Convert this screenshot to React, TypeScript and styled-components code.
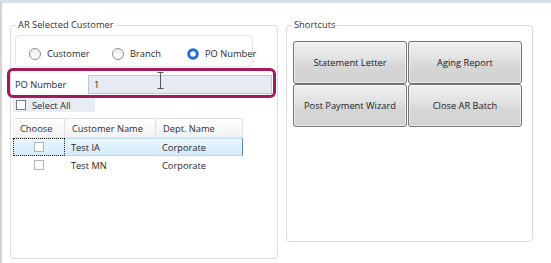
import React from 'react';
import styled, { createGlobalStyle } from 'styled-components';

const Global = createGlobalStyle`
  html, body { margin: 0; padding: 0; background: #fff; }
  body { font-family: "Open Sans", "Noto Sans", sans-serif; font-size: 9.3px; color: #1f1f1f; }
  * { box-sizing: border-box; }
`;

const Window = styled.div`
  width: 551px;
  height: 263px;
  overflow: hidden;
  border-top: 3px solid #d6e0eb;
  border-left: 2px solid #d3d3d3;
  display: flex;
  align-items: flex-start;
  gap: 8px;
  padding: 15px 0 0 8px;
`;

const Group = styled.fieldset<{ $w: number; $h: number }>`
  margin: 0;
  padding: 0;
  min-width: 0;
  width: ${p => p.$w}px;
  height: ${p => p.$h}px;
  border: 1px solid #dcdcdc;
  border-radius: 4px;
  display: flex;
  flex-direction: column;
  align-items: flex-start;
`;

const Legend = styled.legend`
  margin-left: 5px;
  padding: 0 2px;
  line-height: 14px;
  color: #333;
`;

const RadioPanel = styled.div`
  margin: 3px 0 0 4px;
  width: 238px;
  height: 32px;
  border: 1px solid #e6e6e6;
  border-radius: 4px;
  padding: 5px 0 0 13px;
  display: grid;
  grid-template-columns: 83px 75px max-content;
  align-items: center;
`;

const RadioItem = styled.label`
  display: flex;
  align-items: center;
  gap: 6px;
  white-space: nowrap;
  color: #2a2a2a;
`;

const RadioSvg = styled.svg`
  flex: none;
  display: block;
`;

const PORow = styled.div`
  margin: 1px 0 0 -4px;
  width: 269px;
  height: 30px;
  border: 3px solid #a21a5a;
  border-radius: 6px;
  display: flex;
  align-items: center;
  padding: 2px 1px 0 5px;
`;

const FieldLabel = styled.span`
  width: 73px;
  color: #2a2a2a;
`;

const InputWrap = styled.div`
  position: relative;
  flex: 1;
  height: 19px;
  background: #e6ebf3;
  border: 1px solid #bcc6d3;
  display: flex;
  align-items: center;
  padding-left: 5px;
`;

const Cursor = styled.svg`
  position: absolute;
  left: 68px;
  top: -4px;
`;

const SelectAllRow = styled.div`
  margin: 0 0 0 2px;
  width: 82px;
  height: 14px;
  background: #e8edf5;
  display: flex;
  align-items: center;
  gap: 6px;
  padding-left: 3px;
  color: #2a2a2a;
`;

const Box = styled.span<{ $dark?: boolean }>`
  display: inline-block;
  flex: none;
  width: 10px;
  height: 10px;
  background: #fff;
  border: 1px solid ${p => (p.$dark ? '#7d7d7d' : '#b3b3b3')};
`;

const Grid = styled.div`
  margin: 6px 0 0 2px;
  width: 230px;
  display: grid;
  grid-template-columns: 52px 91px 87px;
`;

const HeadCell = styled.div`
  height: 20px;
  display: flex;
  align-items: center;
  padding-left: 6px;
  background: linear-gradient(#ffffff, #f1f2f4);
  border: 1px solid #e2e2e2;
  border-left-color: #f4f4f4;
  color: #2f2f2f;
`;

const Cell = styled.div<{ $sel?: boolean; $focus?: boolean; $center?: boolean; $last?: boolean }>`
  height: 18px;
  display: flex;
  align-items: center;
  justify-content: ${p => (p.$center ? 'center' : 'flex-start')};
  padding-left: ${p => (p.$center ? '0' : '6px')};
  color: #1f1f1f;
  background: ${p => (p.$sel ? 'linear-gradient(#eaf6fd, #d3ebf9)' : 'transparent')};
  border-top: 1px solid ${p => (p.$sel ? '#c4e2f5' : 'transparent')};
  border-bottom: 1px solid ${p => (p.$sel ? '#b5d6ee' : 'transparent')};
  border-right: 1px solid ${p => (p.$sel && p.$last ? '#5f88ad' : 'transparent')};
  ${p => (p.$focus ? 'outline: 1px dotted #222; outline-offset: -1px;' : '')}
`;

const ButtonGrid = styled.div`
  margin: 9px 0 0 6px;
  display: grid;
  grid-template-columns: 114px 114px;
  grid-auto-rows: 43px;
  column-gap: 1px;
`;

const Button = styled.button`
  font: inherit;
  color: #1a1a1a;
  border: 1px solid #737373;
  border-radius: 3px;
  background: linear-gradient(#f0f0f0 0%, #e2e2e2 40%, #d6d6d6 60%, #d2d2d2 100%);
  box-shadow: inset 0 0 0 1px rgba(255, 255, 255, 0.55);
  padding: 0;
`;

const Radio: React.FC<{ checked?: boolean }> = ({ checked }) => (
  <RadioSvg width="12" height="12" viewBox="0 0 12 12">
    <defs>
      <linearGradient id="rg" x1="0" y1="0" x2="0" y2="1">
        <stop offset="0" stopColor="#ececec" />
        <stop offset="1" stopColor="#ffffff" />
      </linearGradient>
    </defs>
    {checked ? (
      <circle cx="6" cy="6" r="4.3" fill="#fff" stroke="#1e6fd6" strokeWidth="3" />
    ) : (
      <circle cx="6" cy="6" r="5.5" fill="url(#rg)" stroke="#8e8e8e" strokeWidth="1" />
    )}
  </RadioSvg>
);

const rows = [
  { name: 'Test IA', dept: 'Corporate', sel: true },
  { name: 'Test MN', dept: 'Corporate', sel: false },
];

export default function App() {
  return (
    <>
      <Global />
      <Window>
        <Group $w={268} $h={241}>
          <Legend>AR Selected Customer</Legend>
          <RadioPanel>
            <RadioItem><Radio />Customer</RadioItem>
            <RadioItem><Radio />Branch</RadioItem>
            <RadioItem><Radio checked />PO Number</RadioItem>
          </RadioPanel>
          <PORow>
            <FieldLabel>PO Number</FieldLabel>
            <InputWrap>
              1
              <Cursor width="7" height="17" viewBox="0 0 7 17">
                <path d="M0.5 0.5h6M3.5 0.5v16M0.5 16.5h6" stroke="#555" strokeWidth="1" fill="none" />
              </Cursor>
            </InputWrap>
          </PORow>
          <SelectAllRow>
            <Box $dark />
            Select All
          </SelectAllRow>
          <Grid>
            <HeadCell>Choose</HeadCell>
            <HeadCell>Customer Name</HeadCell>
            <HeadCell>Dept. Name</HeadCell>
            {rows.map(r => (
              <React.Fragment key={r.name}>
                <Cell $sel={r.sel} $focus={r.sel} $center><Box /></Cell>
                <Cell $sel={r.sel}>{r.name}</Cell>
                <Cell $sel={r.sel} $last>{r.dept}</Cell>
              </React.Fragment>
            ))}
          </Grid>
        </Group>
        <Group $w={247} $h={224}>
          <Legend>Shortcuts</Legend>
          <ButtonGrid>
            <Button>Statement Letter</Button>
            <Button>Aging Report</Button>
            <Button>Post Payment Wizard</Button>
            <Button>Close AR Batch</Button>
          </ButtonGrid>
        </Group>
      </Window>
    </>
  );
}
